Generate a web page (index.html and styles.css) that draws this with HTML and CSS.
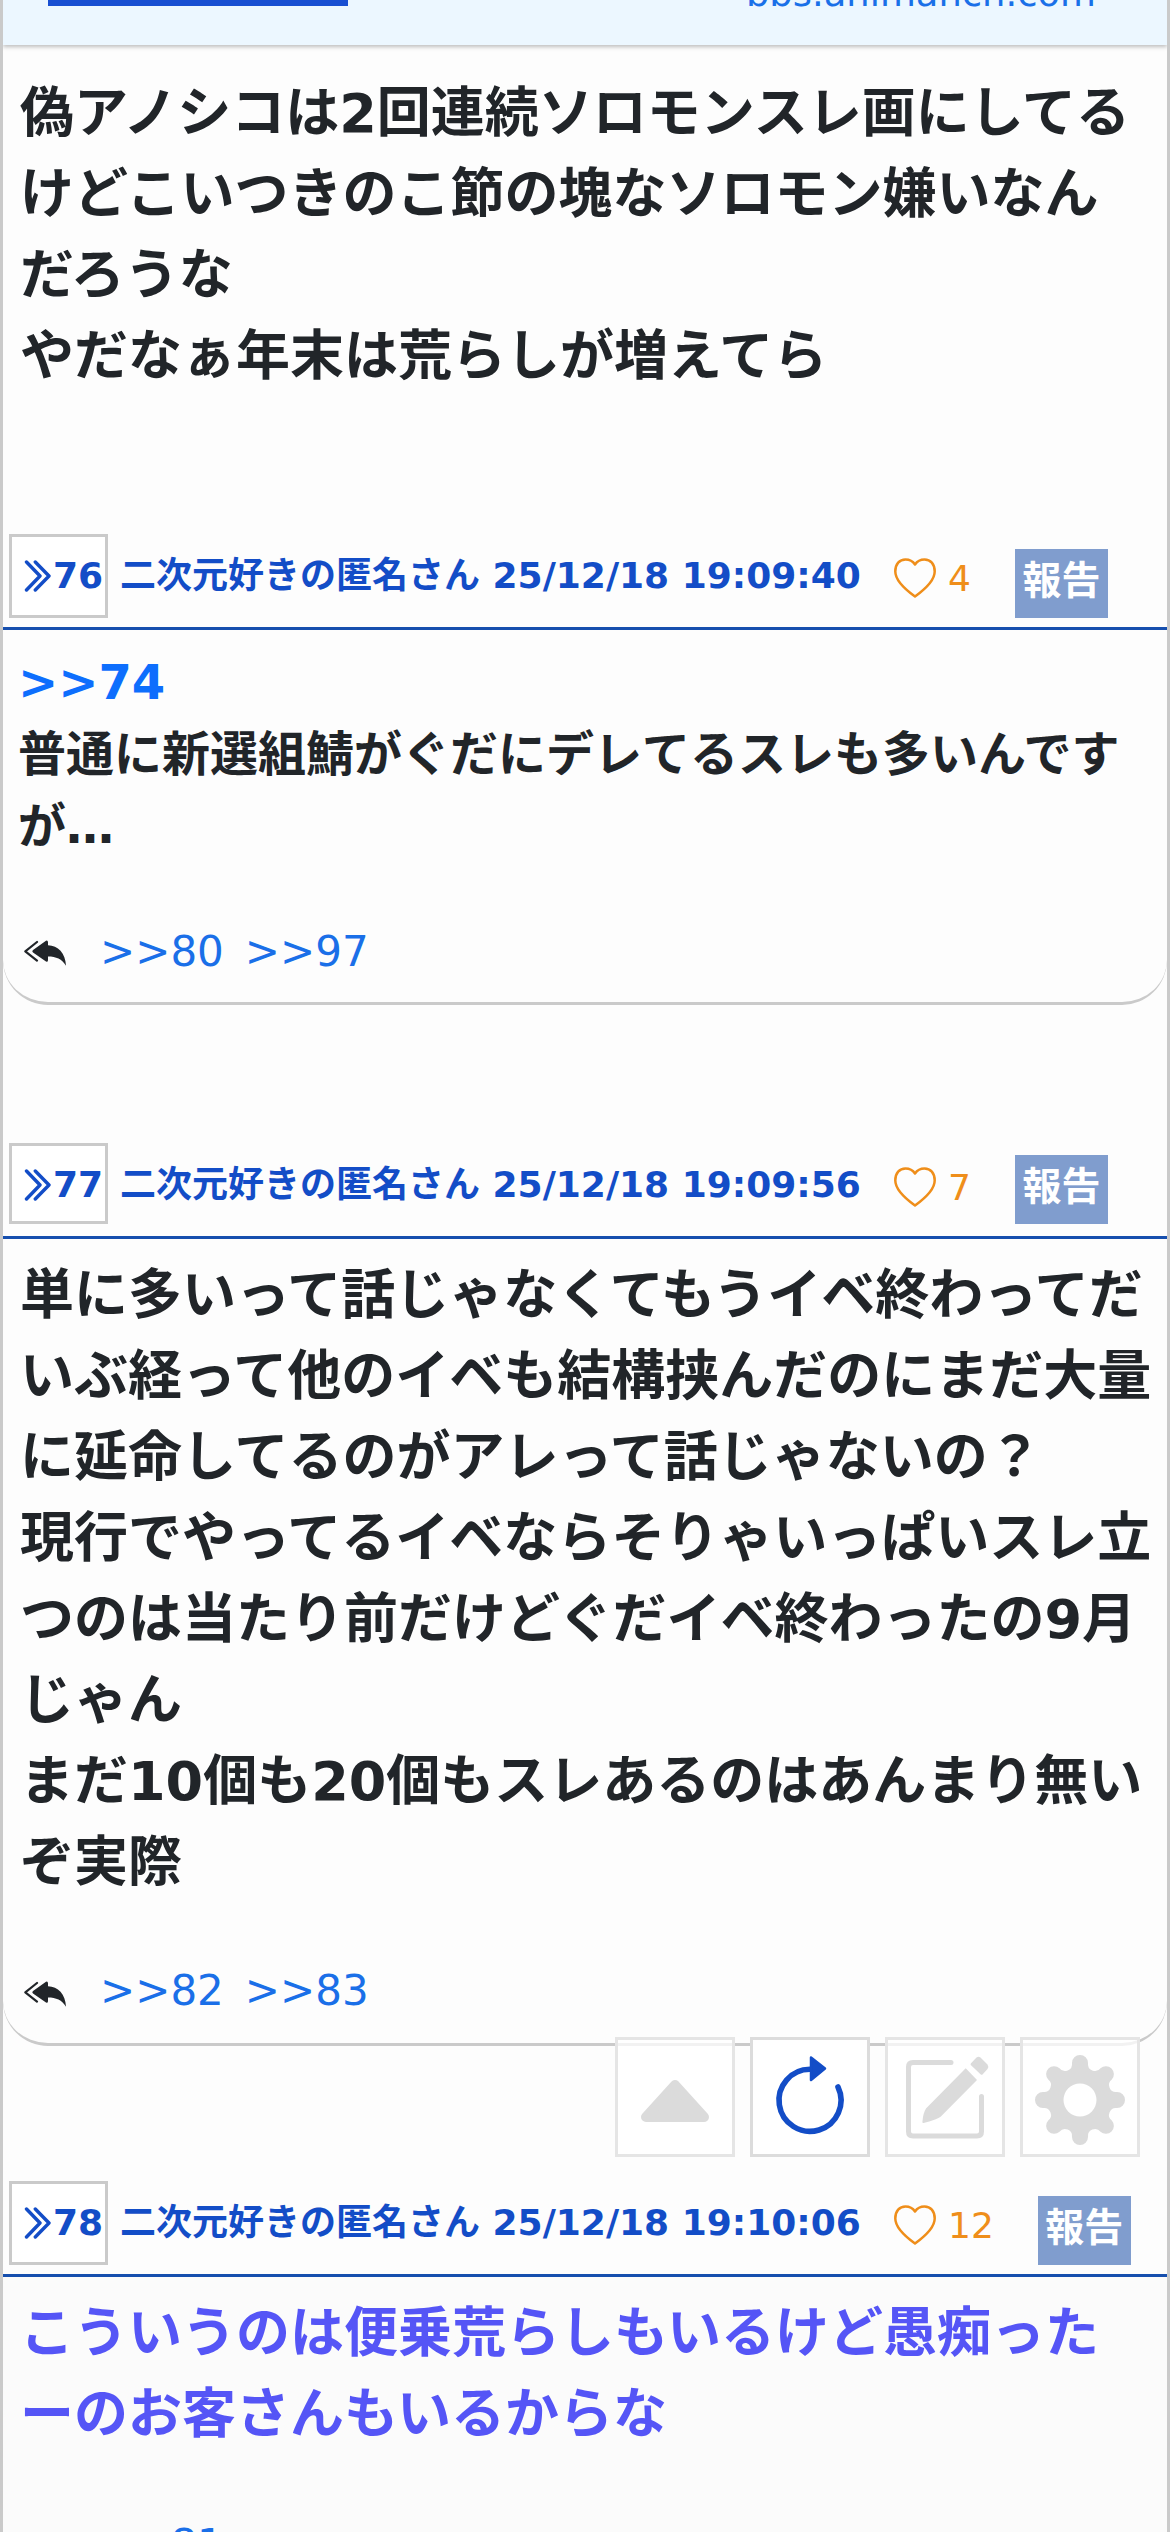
FILE: index.html
```html
<!DOCTYPE html>
<html lang="ja">
<head>
<meta charset="utf-8">
<title>スレッド</title>
<link rel="stylesheet" href="styles.css">
</head>
<body>
<svg class="defs" aria-hidden="true">
  <symbol id="chevrons" viewBox="0 0 27 32">
    <path d="M2.500 2 16 16 2.500 30M11.300 2 25 16 11.300 30" fill="none" stroke="currentColor" stroke-width="3.400" stroke-linecap="round" stroke-linejoin="round"/>
  </symbol>
  <symbol id="heart" viewBox="0 0 42 40">
    <path d="M21 38.500C12 32 1.300 22.500 1.300 13.500 1.300 6 5.500 1.500 11.500 1.500 16 1.500 19 3.500 21 6.500 23 3.500 26 1.500 30.500 1.500 36.500 1.500 40.700 6 40.700 13.500 40.700 22.500 30 32 21 38.500Z" fill="none" stroke="currentColor" stroke-width="2.500" stroke-linejoin="round"/>
  </symbol>
  <symbol id="reply" viewBox="24 20 43 26">
    <path d="M37 22 25.300 31.300 37 40.600" fill="none" stroke="currentColor" stroke-width="2.200" stroke-linecap="round" stroke-linejoin="round"/>
    <path d="M46 20.700Q48 20 48 22.500V25.300C58 25.500 65.500 33 66 45.700 62 39 56 36.500 48 36.500V40Q48 42.600 46 41.400L33 32.500Q31.500 31.200 33 30Z" fill="currentColor"/>
  </symbol>
</svg>
<div class="thread">
  <header class="topbar">
    <span class="topbar-button"></span>
    <a class="topbar-link">bbs.animanch.com</a>
  </header>

  <article class="post post-first">
    <div class="post-body large">偽アノシコは2回連続ソロモンスレ画にしてる<br>けどこいつきのこ節の塊なソロモン嫌いなん<br>だろうな<br>やだなぁ年末は荒らしが増えてら</div>
  </article>

  <article class="post">
    <div class="post-head">
      <a class="post-number"><svg class="chevrons"><use href="#chevrons"/></svg>76</a>
      <span class="post-name">二次元好きの匿名さん 25/12/18 19:09:40</span>
      <span class="post-like"><svg class="heart"><use href="#heart"/></svg>4</span>
      <span class="post-report">報告</span>
    </div>
    <div class="post-content">
      <div class="post-body"><a class="anchor">&gt;&gt;74</a><br>普通に新選組鯖がぐだにデレてるスレも多いんです<br>が…</div>
      <div class="replies"><svg class="reply"><use href="#reply"/></svg><a>&gt;&gt;80</a><a>&gt;&gt;97</a></div>
    </div>
  </article>

  <article class="post">
    <div class="post-head compact">
      <a class="post-number"><svg class="chevrons"><use href="#chevrons"/></svg>77</a>
      <span class="post-name">二次元好きの匿名さん 25/12/18 19:09:56</span>
      <span class="post-like"><svg class="heart"><use href="#heart"/></svg>7</span>
      <span class="post-report">報告</span>
    </div>
    <div class="post-content">
      <div class="post-body large">単に多いって話じゃなくてもうイベ終わってだ<br>いぶ経って他のイベも結構挟んだのにまだ大量<br>に延命してるのがアレって話じゃないの？<br>現行でやってるイベならそりゃいっぱいスレ立<br>つのは当たり前だけどぐだイベ終わったの9月<br>じゃん<br>まだ10個も20個もスレあるのはあんまり無い<br>ぞ実際</div>
      <div class="replies"><svg class="reply"><use href="#reply"/></svg><a>&gt;&gt;82</a><a>&gt;&gt;83</a></div>
    </div>
  </article>

  <article class="post post-last">
    <div class="post-head">
      <a class="post-number"><svg class="chevrons"><use href="#chevrons"/></svg>78</a>
      <span class="post-name">二次元好きの匿名さん 25/12/18 19:10:06</span>
      <span class="post-like"><svg class="heart"><use href="#heart"/></svg>12</span>
      <span class="post-report">報告</span>
    </div>
    <div class="post-content">
      <div class="post-body large accent">こういうのは便乗荒らしもいるけど愚痴った<br>ーのお客さんもいるからな</div>
      <div class="replies"><svg class="reply"><use href="#reply"/></svg><a>&gt;&gt;81</a></div>
    </div>
  </article>
</div>

<nav class="tools">
  <span class="tool">
    <svg viewBox="0 0 120 120"><path d="M60 48 89 80H31Z" fill="currentColor" stroke="currentColor" stroke-width="10" stroke-linejoin="round"/></svg>
  </span>
  <span class="tool active">
    <svg viewBox="0 0 120 120"><path d="M60 32.300A31 31 0 1 0 88 50" fill="none" stroke="currentColor" stroke-width="5.600" stroke-linecap="round"/><path d="M61 20.500 75 31.500 61 43Z" fill="currentColor" stroke="currentColor" stroke-width="2.500" stroke-linejoin="round"/></svg>
  </span>
  <span class="tool">
    <svg viewBox="0 0 120 120"><path d="M66 25.500H28Q23.500 25.500 23.500 30V94.500Q23.500 99 28 99H92Q96.500 99 96.500 94.500V59.500" fill="none" stroke="currentColor" stroke-width="5" stroke-linecap="round"/><path d="M80.700 31.300 92 43 55.600 79.700Q53 82 38.600 86 36.800 86.500 37.500 84 38 76.500 41 71.500ZM85.800 26.500 91.500 20.500Q93.500 18.800 95.500 20.500L102.500 27.500Q104.200 30 102.500 32L97.500 37.500Q96.500 38.200 95.500 37.300L85.800 28Q85.300 27.200 85.800 26.500Z" fill="currentColor"/></svg>
  </span>
  <span class="tool">
    <svg viewBox="-60 -63 120 120"><path fill="currentColor" fill-rule="evenodd" d="M-8-37A8 8 0 0 1 8-37A7 7 0 0 0 20.500-31.800A8 8 0 0 1 31.800-20.500A7 7 0 0 0 37-8A8 8 0 0 1 37 8A7 7 0 0 0 31.800 20.500A8 8 0 0 1 20.500 31.800A7 7 0 0 0 8 37A8 8 0 0 1-8 37A7 7 0 0 0-20.500 31.800A8 8 0 0 1-31.800 20.500A7 7 0 0 0-37 8A8 8 0 0 1-37-8A7 7 0 0 0-31.800-20.500A8 8 0 0 1-20.500-31.800A7 7 0 0 0-8-37ZM16.500 0A16.500 16.500 0 1 0-16.500 0A16.500 16.500 0 1 0 16.500 0Z"/></svg>
  </span>
</nav>
</body>
</html>
```
FILE: styles.css
```css
* {
  box-sizing: border-box;
}

body {
  margin: 0;
  height: 2532px;
  overflow: hidden;
  background: #fdfdfd;
  color: #212529;
  font-family: "DejaVu Sans", "Noto Sans CJK JP", sans-serif;
  font-size: 48px;
  line-height: 1.5;
}

.defs {
  display: none;
}

.thread {
  height: 2532px;
  overflow: hidden;
  border: solid #cacaca;
  border-width: 0 3px;
}

.topbar {
  display: flex;
  height: 45px;
  padding: 0 71px 0 45px;
  justify-content: space-between;
  background: #ecf7ff;
  box-shadow: 0 2px 4px rgba(0, 0, 0, 0.25);
}

.topbar-button {
  width: 300px;
  height: 6px;
  background: #184fd2;
}

.topbar-link {
  margin-top: -34px;
  font-size: 36.900px;
  color: #1a70e8;
}

.post {
  margin-bottom: 138px;
}

.post-first {
  height: 489px;
  margin-bottom: 0;
  padding-top: 12px;
}

.post-head {
  display: flex;
  height: 96px;
  padding-left: 6px;
  align-items: flex-start;
  border-bottom: 3px solid #164fae;
  font-size: 36px;
  line-height: 54px;
  white-space: nowrap;
}

.post-number {
  display: flex;
  width: 99px;
  height: 84px;
  padding: 12px 0 0 12px;
  border: 3px solid #cacaca;
  background: #fff;
  color: #134dc7;
  font-weight: bold;
}

.chevrons {
  width: 27px;
  height: 32px;
  margin: 11px 2px 0 0;
}

.post-name {
  width: 750px;
  margin-top: 15px;
  padding-left: 12px;
  color: #134dc7;
  font-weight: bold;
}

.post-like {
  display: flex;
  margin: 18px 0 0 36px;
  color: #ef8e1a;
}

.heart {
  width: 42px;
  height: 40px;
  margin: 6px 12px 0 0;
}

.post-report {
  width: 93px;
  height: 69px;
  margin: 15px 0 0 44px;
  background: #809dce;
  color: #fff;
  font-size: 39px;
  font-weight: bold;
  line-height: 63px;
  text-align: center;
}

.compact .post-number {
  height: 81px;
}

.compact .post-report {
  margin-top: 12px;
}

.post-content {
  padding-bottom: 19px;
  border-bottom: 3px solid #cacaca;
  border-radius: 0 0 45px 45px;
}

.post-body {
  padding: 16px 0 0 15px;
  font-weight: bold;
  white-space: nowrap;
}

.large {
  padding-left: 17px;
  font-size: 54px;
}

.accent {
  color: #5555f6;
}

.anchor {
  color: #0d6efd;
}

.replies {
  display: flex;
  height: 63px;
  margin-top: 58px;
  padding-left: 21px;
  gap: 21px;
  font-size: 42px;
  line-height: 63px;
  color: #1a6fe8;
}

.reply {
  width: 43px;
  height: 26px;
  margin: 20px 12px 0 0;
  color: #212529;
}

.post:nth-of-type(3) {
  margin-bottom: 135px;
}

.compact + .post-content .replies a {
  margin-top: -2px;
}

.post-last .post-content {
  background: #fbfbfb;
}

/* Floating buttons over the thread */
.tools {
  position: absolute;
  top: 2037px;
  right: 30px;
  display: flex;
  gap: 15px;
}

.tool {
  width: 120px;
  height: 120px;
  border: 3px solid #e5e5e5;
  background: rgba(255, 255, 255, 0.75);
  color: #dbdbdb;
}

.tool.active {
  border-color: #dcdcdc;
  background: #fff;
  color: #134dc7;
}

.tool svg {
  display: block;
  width: 120px;
  height: 120px;
  margin: -3px;
}
```
